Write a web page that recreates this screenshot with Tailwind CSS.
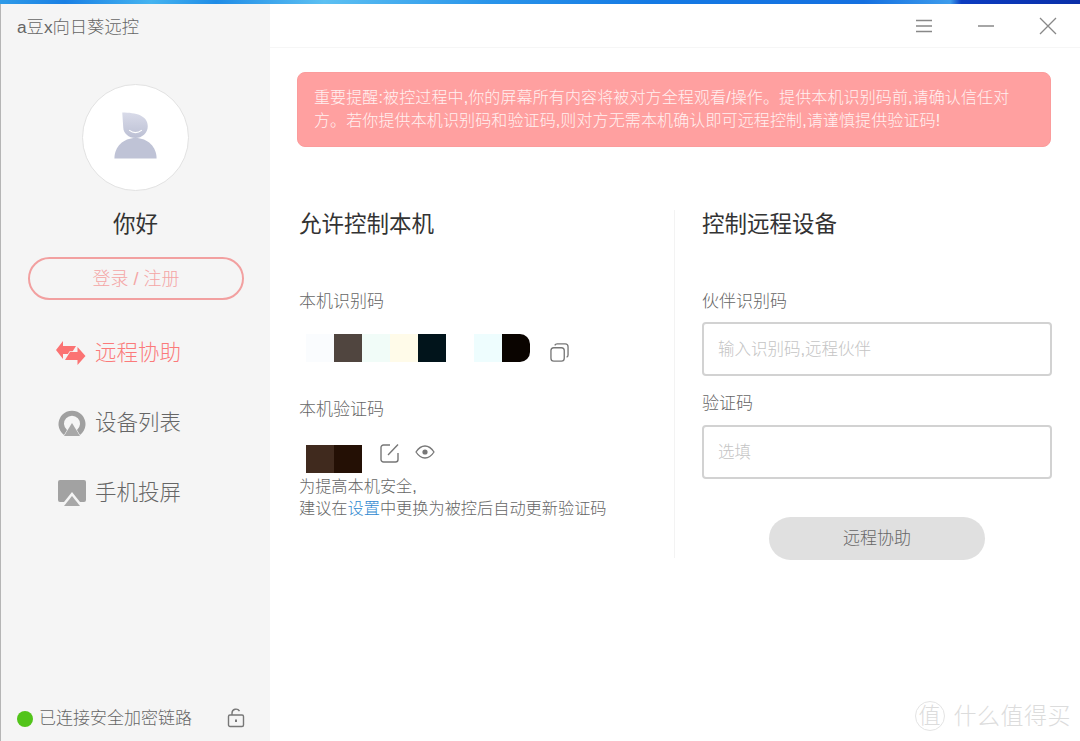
<!DOCTYPE html>
<html lang="zh-CN">
<head>
  <meta charset="UTF-8" />
  <title>向日葵远控</title>
  <script src="https://cdn.jsdelivr.net/npm/@tailwindcss/browser@4"></script>
</head>
<body class="w-[1080px] h-[741px] overflow-hidden bg-white font-['Liberation_Sans','Noto_Sans_CJK_SC',sans-serif] font-light">
  <div class="relative flex flex-col h-full">
    <!-- desktop wallpaper peeking over the window -->
    <div class="h-1 shrink-0 bg-[linear-gradient(90deg,#2f9be8_0%,#1a80e4_6%,#45b4f0_14%,#1f8ce6_20%,#5cc0f2_30%,#2a95ea_45%,#157ae4_60%,#1570e0_80%,#3d9cec_88%,#0c3cc0_89%,#0a2fa8_100%)]"></div>

    <div class="flex flex-1 min-h-0">
      <!-- sidebar -->
      <aside class="w-[270px] shrink-0 flex flex-col bg-[#f5f5f5] border-l border-[#b5b5b5]">
        <div class="pl-4 pt-[11px] text-[17.300px] leading-6 text-[#666]">a豆x向日葵远控</div>

        <div class="mt-[45px] ml-[81px] size-[107px] rounded-full bg-white border border-[#e2e2e2]">
          <svg viewBox="82 84 107 107" class="size-full">
            <defs>
              <linearGradient id="av" x1="0" y1="0" x2="0" y2="1">
                <stop offset="0" stop-color="#d9dbe9"/>
                <stop offset="1" stop-color="#bcc0d4"/>
              </linearGradient>
            </defs>
            <path d="M114 159c0-12 9-21 21.500-21s21.500 9 21.500 21z" fill="#bfc3d6"/>
            <path d="M122 112c14 0 26 3 26 14 0 7-6 12-12.500 12-7 0-12.500-5-12.500-11z" fill="url(#av)"/>
            <path d="M129 130c4 3 9 3 13 0" stroke="#fff" stroke-width="1.200" fill="none"/>
          </svg>
        </div>

        <div class="mt-[18px] text-center text-[22.500px] leading-8 text-[#333] font-normal">你好</div>

        <button class="mt-[16px] ml-[27px] w-[216px] h-[43px] rounded-full border-2 border-[#f2a0a0] pt-[1px] text-[18px] text-[#f4a5a5]">登录 / 注册</button>

        <nav class="mt-[37px] flex flex-col gap-[38px] pl-[55px] text-[21.500px] leading-8 text-[#666]">
          <a class="flex items-center gap-[9px] text-[#fb7a7a]">
            <svg viewBox="0 0 30 24" class="w-[30px] h-6 fill-[#fb7373]">
              <path d="M0 9 7 0v5h13l-5 8H7v5z"/>
              <path d="M29.500 15 21.500 24v-5H9l5-8h7.500V6z" stroke="#f5f5f5" stroke-width="1.500" paint-order="stroke"/>
            </svg>
            远程协助
          </a>
          <a class="flex items-center gap-[9px]">
            <svg viewBox="0 0 30 30" class="w-[30px] h-[30px]">
              <path d="M7 27A13.500 13.500 0 1 1 23 27l-3-5a8 8 0 1 0-10 0z" fill="#a0a0a0" transform="translate(1)"/>
              <path d="M16 15 24 28H8z" fill="#a8a8a8"/>
            </svg>
            设备列表
          </a>
          <a class="flex items-center gap-[9px]">
            <svg viewBox="0 0 30 30" class="w-[30px] h-[30px]">
              <path d="M4 2h24a2 2 0 0 1 2 2v18a2 2 0 0 1-2 2h-4L16 14 8 24H4a2 2 0 0 1-2-2V4a2 2 0 0 1 2-2z" fill="#a2a2a2"/>
              <path d="M16 18 24 28H8z" fill="#a8a8a8"/>
            </svg>
            手机投屏
          </a>
        </nav>

        <div class="mt-auto mb-[10px] pl-4 flex items-center text-[17px] leading-6 text-[#666]">
          <span class="size-4 rounded-full bg-[#52c41a]"></span>
          <span class="ml-[6px]">已连接安全加密链路</span>
          <svg viewBox="0 0 18 20" class="ml-[35px] -mt-[2px] w-[18px] h-5 fill-none stroke-[#777] stroke-[1.400]">
            <rect x="1.500" y="7" width="15" height="11.500" rx="1.500"/>
            <path d="M5 7V5a4 4 0 0 1 7.500-1.800"/>
            <path d="M9 11.500v2.500" stroke-width="2"/>
          </svg>
        </div>
      </aside>

      <!-- main panel -->
      <main class="flex-1 min-w-0 flex flex-col">
        <header class="h-11 shrink-0 flex items-center justify-end gap-[44px] pr-[23px] border-b border-[#f6f6f6]">
          <svg viewBox="0 0 18 14" class="w-[18px] h-[14px] stroke-[#888] stroke-[1.500]">
            <path d="M1 1.500h16M1 7h16M1 12.500h16"/>
          </svg>
          <svg viewBox="0 0 18 14" class="w-[18px] h-[14px] stroke-[#888] stroke-[1.500]">
            <path d="M1 7h16"/>
          </svg>
          <svg viewBox="0 0 18 18" class="w-[18px] h-[18px] stroke-[#888] stroke-[1.300]">
            <path d="M1 1l16 16M17 1 1 17"/>
          </svg>
        </header>

        <div class="mt-6 ml-[27px] w-[754px] h-[75px] rounded-lg bg-[#ffa0a0] border border-[#fb9c9c] px-4 pt-[13px] text-[16px] leading-[23px] tracking-[0.120px] text-[#fff1f1]">
          重要提醒:被控过程中,你的屏幕所有内容将被对方全程观看/操作。提供本机识别码前,请确认信任对方。若你提供本机识别码和验证码,则对方无需本机确认即可远程控制,请谨慎提供验证码!
        </div>

        <div class="flex mt-[63px] ml-[29px]">
          <!-- this machine -->
          <section class="w-[376px] h-[348px] border-r border-[#f3f3f3]">
            <h2 class="text-[22.500px] leading-[30px] text-[#333] font-normal">允许控制本机</h2>
            <div class="mt-[50px] text-[17px] leading-6 text-[#666]">本机识别码</div>
            <div class="mt-[20px] flex items-start pl-[7px]">
              <div class="flex h-7">
                <span class="w-7 bg-[#fafcfe]"></span>
                <span class="w-7 bg-[#50453f]"></span>
                <span class="w-7 bg-[#f1fcf8]"></span>
                <span class="w-7 bg-[#fffbe9]"></span>
                <span class="w-7 bg-[#01141b]"></span>
                <span class="w-7 bg-white"></span>
                <span class="w-7 bg-[#eefdfe]"></span>
                <span class="w-7 bg-[#0a0400] rounded-r-[10px]"></span>
              </div>
              <svg viewBox="0 0 20 20" class="ml-5 mt-[9px] size-[19px] fill-none stroke-[#777] stroke-[1.400]">
                <rect x="1" y="5" width="14" height="14" rx="3"/>
                <path d="M5 2.500C5.500 1.500 6.300 1 7.500 1H16a3 3 0 0 1 3 3v8.500c0 1.200-.5 2-1.500 2.500"/>
              </svg>
            </div>
            <div class="mt-[36px] text-[17px] leading-6 text-[#666]">本机验证码</div>
            <div class="mt-[23px] flex items-start pl-[7px]">
              <div class="flex h-7">
                <span class="w-7 bg-[#402a1e]"></span>
                <span class="w-7 bg-[#241005]"></span>
              </div>
              <svg viewBox="0 0 20 20" class="ml-[18px] -mt-[2px] size-5 fill-none stroke-[#777] stroke-[1.400]">
                <path d="M10 2H3.500A2.500 2.500 0 0 0 1 4.500v12A2.500 2.500 0 0 0 3.500 19h12a2.500 2.500 0 0 0 2.500-2.500V10"/>
                <path d="M8 12 18 1.500"/>
              </svg>
              <svg viewBox="0 0 20 14" class="ml-[15px] w-5 h-[14px] fill-none stroke-[#777] stroke-[1.300]">
                <path d="M1 7c2.500-3.800 5.500-6 9-6s6.500 2.200 9 6c-2.500 3.800-5.500 6-9 6s-6.500-2.200-9-6z"/>
                <circle cx="10" cy="7" r="2.600" fill="#777" stroke="none"/>
              </svg>
            </div>
            <p class="mt-[2px] text-[16.200px] leading-[22px] text-[#666]">为提高本机安全,<br>建议在<a class="text-[#2f88d0]">设置</a>中更换为被控后自动更新验证码</p>
          </section>

          <!-- remote device -->
          <section class="ml-[27px] w-[350px]">
            <h2 class="text-[22.500px] leading-[30px] text-[#333] font-normal">控制远程设备</h2>
            <label class="block mt-[50px] text-[17px] leading-6 text-[#666]">伙伴识别码</label>
            <input placeholder="输入识别码,远程伙伴" class="mt-[8px] block w-full h-[54px] rounded border-2 border-[#d2d2d2] px-[14px] text-[16.500px] placeholder:text-[#c4c4c4]" />
            <label class="block mt-[16px] text-[17px] leading-6 text-[#666]">验证码</label>
            <input placeholder="选填" class="mt-[9px] block w-full h-[54px] rounded border-2 border-[#d2d2d2] px-[14px] text-[16.500px] placeholder:text-[#c4c4c4]" />
            <button class="mt-[38px] mx-auto block w-[216px] h-[43px] rounded-full bg-[#e0e0e0] text-[17px] text-[#666]">远程协助</button>
          </section>
        </div>
      </main>
    </div>

    <!-- site watermark over the shot -->
    <div class="absolute right-[9px] bottom-[9px] flex items-center gap-[9px] text-[#dcdcdc]">
      <span class="size-[30px] rounded-full border border-[#e4e4e4] flex items-center justify-center text-[22px] leading-none">值</span>
      <span class="text-[23px] leading-8 tracking-[0.500px]">什么值得买</span>
    </div>
  </div>
</body>
</html>
